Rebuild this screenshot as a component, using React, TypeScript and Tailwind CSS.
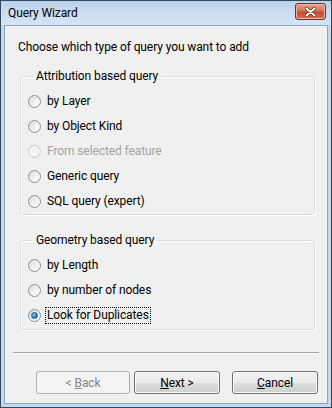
import React from "react";

function Radio({ label, checked, disabled, focus }: { label: string; checked?: boolean; disabled?: boolean; focus?: boolean }) {
  return (
    <div className="flex items-center h-[16px]">
      <span
        className={
          "relative flex items-center justify-center w-[13px] h-[13px] rounded-full border shrink-0 " +
          (disabled
            ? "border-[#c9cacb] bg-[#f4f4f4]"
            : "border-[#8e8f8f] bg-gradient-to-br from-[#d6d6d6] via-[#f0f0f0] to-[#ffffff]")
        }
      >
        {checked && (
          <span className="w-[7px] h-[7px] rounded-full bg-[radial-gradient(circle_at_40%_35%,#8fd0f5_0%,#2b7ed1_55%,#154c8a_100%)] border border-[#1c5d9e]" />
        )}
      </span>
      <span
        className={
          "ml-[4px] px-[1px] leading-[15px] " +
          (focus ? "border border-dotted border-black" : "border border-transparent") +
          (disabled ? " text-[#a3a3a3]" : " text-black")
        }
      >
        {label}
      </span>
    </div>
  );
}

function Group({ title, children }: { title: string; children: React.ReactNode }) {
  return (
    <fieldset className="ml-[15px] w-[295px] border border-[#d5dfe5] rounded-[3px] shadow-[inset_1px_1px_0_#ffffff,1px_1px_0_#ffffff] pl-[7px]">
      <legend className="ml-[5px] px-[3px] leading-[16px] text-black">{title}</legend>
      {children}
    </fieldset>
  );
}

function Button({ children, disabled }: { children: React.ReactNode; disabled?: boolean }) {
  return (
    <div
      className={
        "flex items-center justify-center h-[23px] rounded-[3px] border " +
        (disabled
          ? "border-[#adb2b5] bg-[#f4f4f4] text-[#838383]"
          : "border-[#707070] bg-[linear-gradient(#f2f2f2_0%,#ebebeb_50%,#dddddd_50%,#cfcfcf_100%)] text-black shadow-[inset_0_0_0_1px_#fbfbfb]")
      }
    >
      {children}
    </div>
  );
}

export default function App() {
  return (
    <div className="w-[332px] h-[408px] bg-[#c4d8ee] border border-[#34495e] flex flex-col text-[12px] font-['Roboto',sans-serif]">
      <div className="h-[24px] shrink-0 flex items-center justify-between bg-[linear-gradient(#b9d1ea,#c8dbf0_40%,#d6e5f5)] pl-[7px] pr-[5px]">
        <span className="text-black tracking-[-0.1px]">Query Wizard</span>
        <div className="w-[31px] h-[17px] -mt-[3px] rounded-[3px] border border-[#6d2f2a] bg-[linear-gradient(#e6a28f,#d2735c_45%,#c24a30_55%,#d0705a)] flex items-center justify-center shadow-[inset_0_0_0_1px_#f0b8a8]">
          <svg width="11" height="10" viewBox="0 0 11 10">
            <path d="M1.5 1.5 L9.5 8.5 M9.5 1.5 L1.5 8.5" stroke="#5a2218" strokeWidth="3.4" strokeLinecap="round" />
            <path d="M1.5 1.5 L9.5 8.5 M9.5 1.5 L1.5 8.5" stroke="#ffffff" strokeWidth="2" strokeLinecap="round" />
          </svg>
        </div>
      </div>
      <div className="flex-1 mx-[3px] mb-[3px] bg-[#f0f0f0] border border-[#8aa3bf] flex flex-col tracking-[-0.1px]">
        <div className="ml-[13px] mt-[13px] leading-[16px] text-black">Choose which type of query you want to add</div>

        <div className="mt-[13px]">
          <Group title="Attribution based query">
            <div className="flex flex-col gap-[9px] pt-[9px] pb-[5px]">
              <Radio label="by Layer" />
              <Radio label="by Object Kind" />
              <Radio label="From selected feature" disabled />
              <Radio label="Generic query" />
              <Radio label="SQL query (expert)" />
            </div>
          </Group>
        </div>

        <div className="mt-[17px]">
          <Group title="Geometry based query">
            <div className="flex flex-col gap-[9px] pt-[9px] pb-[6px]">
              <Radio label="by Length" />
              <Radio label="by number of nodes" />
              <Radio label="Look for Duplicates" checked focus />
            </div>
          </Group>
        </div>

        <div className="ml-[8px] w-[306px] mt-[22px] border-t border-[#a0a0a0] border-b border-b-white" />

        <div className="mt-[17px] flex ml-[31px]">
          <div className="w-[94px]">
            <Button disabled>
              &lt; <span className="underline ml-[3px]">B</span>ack
            </Button>
          </div>
          <div className="w-[86px] ml-[4px]">
            <Button>
              <span className="underline">N</span>ext &gt;
            </Button>
          </div>
          <div className="w-[86px] ml-[12px]">
            <Button>
              <span className="underline">C</span>ancel
            </Button>
          </div>
        </div>
      </div>
    </div>
  );
}
